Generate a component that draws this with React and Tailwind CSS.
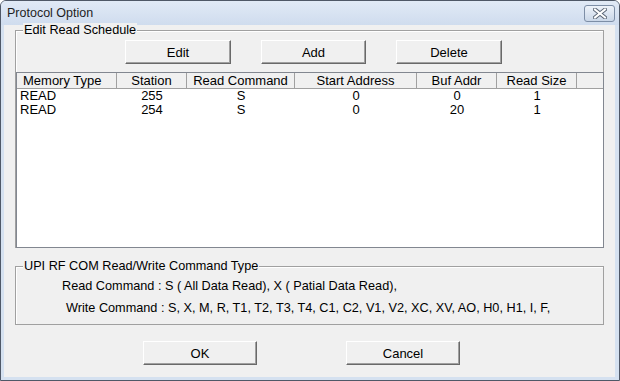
const COLUMNS = [
  { key: "type", label: "Memory Type", width: 100, align: "left" },
  { key: "station", label: "Station", width: 70, align: "center" },
  { key: "cmd", label: "Read Command", width: 108, align: "center" },
  { key: "start", label: "Start Address", width: 122, align: "center" },
  { key: "buf", label: "Buf Addr", width: 80, align: "center" },
  { key: "size", label: "Read Size", width: 80, align: "center" }
];

const ROWS = [
  { id: 1, type: "READ", station: "255", cmd: "S", start: "0", buf: "0", size: "1" },
  { id: 2, type: "READ", station: "254", cmd: "S", start: "0", buf: "20", size: "1" }
];

function WinButton({ children, className = "" }) {
  return (
    <button
      type="button"
      className={`h-[24px] bg-[#f0f0f0] border-t border-l border-t-white border-l-white border-b border-r border-b-[#696969] border-r-[#696969] shadow-[inset_-1px_-1px_0_#a0a0a0] text-[13px] leading-none text-black ${className}`}
    >
      {children}
    </button>
  );
}

function GroupTitle({ children }) {
  return (
    <span className="absolute left-[7px] -top-[8px] px-[1px] bg-[#f0f0f0] text-[12.7px] leading-[15px] text-black">
      {children}
    </span>
  );
}

export default function App() {
  return (
    <div
      className="w-[620px] h-[381px] flex flex-col rounded-t-[6px] border border-[#4f5867] bg-[#d5e1f0] overflow-hidden"
      style={{ fontFamily: '"Liberation Sans", Arial, sans-serif' }}
    >
      {/* title bar */}
      <div className="h-[24px] flex items-center justify-between pl-[6px] pr-[4px] bg-gradient-to-b from-[#e1eaf6] to-[#cfdcee]">
        <span className="text-[12.5px] text-[#1e1e1e]">Protocol Option</span>
        <div className="w-[31px] h-[17px] mt-[1px] flex items-center justify-center rounded-[3px] border border-[#7d8ea6] bg-gradient-to-b from-[#eef3fa] to-[#cad7e8]">
          <svg width="14" height="11" viewBox="0 0 14 11">
            <path d="M2 1.5 L12 9.5 M12 1.5 L2 9.5" stroke="#5c6777" strokeWidth="4" strokeLinecap="square" />
            <path d="M2 1.5 L12 9.5 M12 1.5 L2 9.5" stroke="#ffffff" strokeWidth="2" strokeLinecap="square" />
          </svg>
        </div>
      </div>

      {/* client area */}
      <div className="flex-1 ml-[3px] mr-[4px] mb-[3px] bg-[#f0f0f0] flex flex-col">
        {/* Edit Read Schedule */}
        <div className="relative ml-[11px] mt-[5px] w-[589px] border-t border-l border-r border-[#a0a0a0] shadow-[inset_1px_1px_0_#fff]">
          <GroupTitle>Edit Read Schedule</GroupTitle>
          <div className="flex gap-[30px] pl-[109px] pt-[9px]">
            <WinButton className="w-[106px]">Edit</WinButton>
            <WinButton className="w-[105px]">Add</WinButton>
            <WinButton className="w-[106px]">Delete</WinButton>
          </div>

          <div className="mt-[8px] -mr-[1px] h-[176px] bg-white border border-[#828790] flex flex-col">
            <div className="flex h-[16px] bg-[#f0f0f0] border-b border-[#a0a0a0] text-[13px] leading-[15px]">
              {COLUMNS.map((col) => (
                <div
                  key={col.key}
                  className={`shrink-0 border-r border-[#a0a0a0] ${
                    col.align === "left" ? "text-left pl-[6px]" : "text-center"
                  }`}
                  style={{ width: col.width }}
                >
                  {col.label}
                </div>
              ))}
              <div className="flex-1" />
            </div>
            {ROWS.map((row) => (
              <div key={row.id} className="flex h-[14px] text-[13px] leading-[14px] text-black">
                {COLUMNS.map((col) => (
                  <div
                    key={col.key}
                    className={`shrink-0 ${col.align === "left" ? "text-left pl-[3px]" : "text-center"}`}
                    style={{ width: col.width }}
                  >
                    {row[col.key]}
                  </div>
                ))}
              </div>
            ))}
          </div>
        </div>

        {/* UPI RF COM Read/Write Command Type */}
        <div className="relative ml-[11px] mt-[18px] w-[589px] h-[59px] border border-[#a0a0a0] shadow-[inset_1px_1px_0_#fff]">
          <GroupTitle>UPI RF COM Read/Write Command Type</GroupTitle>
          <div className="flex flex-col gap-[8px] pt-[12px] text-[12.7px] leading-[14px] text-black">
            <div className="pl-[46px]">Read Command : S ( All Data Read), X ( Patial Data Read),</div>
            <div className="pl-[50px]">
              Write Command : S, X, M, R, T1, T2, T3, T4, C1, C2, V1, V2, XC, XV, AO, H0, H1, I, F,
            </div>
          </div>
        </div>

        <div className="flex pl-[139px] gap-[89px] mt-[16px]">
          <WinButton className="w-[114px]">OK</WinButton>
          <WinButton className="w-[114px]">Cancel</WinButton>
        </div>
      </div>
    </div>
  );
}
